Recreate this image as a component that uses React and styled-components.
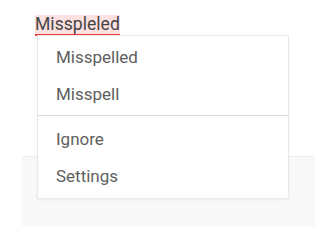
import React from 'react';
import styled, { createGlobalStyle } from 'styled-components';

const GlobalStyle = createGlobalStyle`
  body {
    margin: 0;
    background: #ffffff;
    font-family: Roboto, "Liberation Sans", sans-serif;
    overflow: hidden;
  }
`;

const Page = styled.div`
  padding: 15px 0 0 22px;
`;

const Editor = styled.div`
  width: 293px;
`;

const Line = styled.div`
  padding-left: 13px;
  height: 21px;
`;

const Word = styled.span`
  position: relative;
  display: inline-block;
  font-size: 17.6px;
  line-height: 19px;
  color: #444444;
  background: #fde1e1;
  border-bottom: 2px solid #ef3b3b;
`;

const Menu = styled.ul`
  position: absolute;
  top: calc(100% + 1px);
  left: 2px;
  width: 252px;
  box-sizing: border-box;
  margin: 0;
  padding: 3px 0 3px;
  list-style: none;
  background: #ffffff;
  border: 1px solid #e8e8e8;
  box-shadow: 0 1px 2px rgba(0, 0, 0, 0.05);
  z-index: 2;
`;

const Item = styled.li`
  height: 37px;
  line-height: 37px;
  padding-left: 18px;
  font-size: 17px;
  color: #606060;
  cursor: pointer;
`;

const Divider = styled.li`
  height: 1px;
  margin: 2px 0 5px;
  background: #dcdcdc;
`;

const Panel = styled.div`
  margin-top: 120px;
  height: 69px;
  background: #f8f8f8;
  border-top: 1px solid #eeeeee;
`;

const suggestions = ['Misspelled', 'Misspell'];
const actions = ['Ignore', 'Settings'];

const App = () => (
  <>
    <GlobalStyle />
    <Page>
      <Editor>
        <Line>
          <Word>
            Misspleled
            <Menu>
              {suggestions.map(s => (
                <Item key={s}>{s}</Item>
              ))}
              <Divider />
              {actions.map(a => (
                <Item key={a}>{a}</Item>
              ))}
            </Menu>
          </Word>
        </Line>
        <Panel />
      </Editor>
    </Page>
  </>
);

export default App;
